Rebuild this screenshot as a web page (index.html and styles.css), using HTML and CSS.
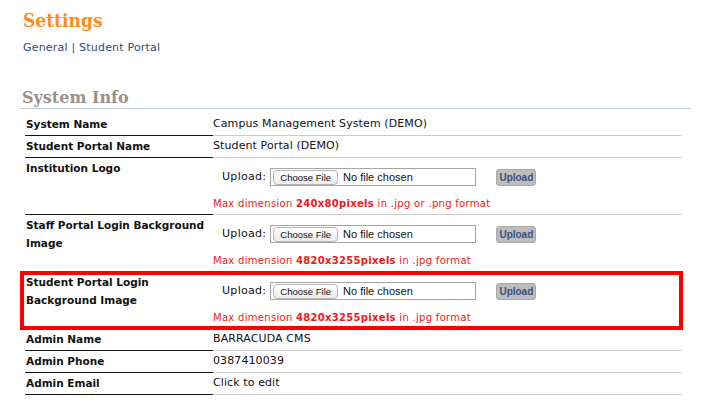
FILE: index.html
```html
<!DOCTYPE html>
<html lang="en">
<head>
    <meta charset="UTF-8">
    <title>Settings</title>
    <link rel="stylesheet" href="styles.css">
</head>
<body>
    <div class="page">
        <h1 class="page-title">Settings</h1>
        <div class="sub-nav">
            <a href="#">General</a> | <a href="#">Student Portal</a>
        </div>

        <h2 class="section-title">System Info</h2>
        <div class="info-table">
            <div class="info-row">
                <div class="info-label">System Name</div>
                <div class="info-value">Campus Management System (DEMO)</div>
            </div>
            <div class="info-row">
                <div class="info-label">Student Portal Name</div>
                <div class="info-value">Student Portal (DEMO)</div>
            </div>
            <div class="info-row">
                <div class="info-label">Institution Logo</div>
                <div class="info-value">
                    <div class="upload-line">
                        <span class="upload-caption">Upload:</span>
                        <span class="file-box"><span class="choose-btn">Choose File</span><span class="file-name">No file chosen</span></span>
                        <button class="upload-btn">Upload</button>
                    </div>
                    <div class="upload-hint">Max dimension <b>240x80pixels</b> in .jpg or .png format</div>
                </div>
            </div>
            <div class="info-row">
                <div class="info-label">Staff Portal Login Background Image</div>
                <div class="info-value">
                    <div class="upload-line">
                        <span class="upload-caption">Upload:</span>
                        <span class="file-box"><span class="choose-btn">Choose File</span><span class="file-name">No file chosen</span></span>
                        <button class="upload-btn">Upload</button>
                    </div>
                    <div class="upload-hint">Max dimension <b>4820x3255pixels</b> in .jpg format</div>
                </div>
            </div>
            <div class="info-row highlighted">
                <div class="info-label">Student Portal Login Background Image</div>
                <div class="info-value">
                    <div class="upload-line">
                        <span class="upload-caption">Upload:</span>
                        <span class="file-box"><span class="choose-btn">Choose File</span><span class="file-name">No file chosen</span></span>
                        <button class="upload-btn">Upload</button>
                    </div>
                    <div class="upload-hint">Max dimension <b>4820x3255pixels</b> in .jpg format</div>
                </div>
            </div>
            <div class="info-row">
                <div class="info-label">Admin Name</div>
                <div class="info-value">BARRACUDA CMS</div>
            </div>
            <div class="info-row">
                <div class="info-label">Admin Phone</div>
                <div class="info-value">0387410039</div>
            </div>
            <div class="info-row">
                <div class="info-label">Admin Email</div>
                <div class="info-value">Click to edit</div>
            </div>
        </div>
    </div>
</body>
</html>
```

FILE: styles.css
```css
body {
    margin: 0;
    background: #fff;
    font-family: "DejaVu Sans", Verdana, sans-serif;
    color: #111;
}
.page {
    width: 671px;
    padding-left: 20px;
}
.page-title {
    margin: 8px 0 0 3px;
    font-family: "DejaVu Serif Condensed", "DejaVu Serif", Georgia, serif;
    font-size: 19px;
    line-height: 24px;
    color: #ff8c1e;
}
.sub-nav {
    margin: 9px 0 0 3px;
    font-size: 11px;
    line-height: 14px;
    letter-spacing: 0.2px;
    color: #2f4a7c;
}
.sub-nav a {
    color: #2f4a7c;
    text-decoration: none;
}
.section-title {
    margin: 33px 0 0 0;
    padding: 0 0 0 2px;
    font-family: "DejaVu Serif", Georgia, serif;
    font-size: 16px;
    line-height: 20px;
    color: #9a918a;
    border-bottom: 1px solid #b9c8dc;
}
.info-table {
    margin: 5px 0 0 5px;
    width: 657px;
}
.info-row {
    display: flex;
    position: relative;
}
.info-label {
    width: 187px;
    padding: 1px 0 2px 1px;
    font-size: 10.5px;
    font-weight: bold;
    line-height: 18px;
    border-bottom: 1px solid #111;
}
.info-value {
    flex: 1;
    padding: 1px 0 2px 0;
    font-size: 11px;
    line-height: 18px;
    letter-spacing: 0.1px;
    border-bottom: 1px solid #ccc;
}
.upload-line {
    display: flex;
    align-items: center;
    height: 20px;
    margin: 8px 0 0 9px;
}
.upload-caption {
    font-size: 11px;
    letter-spacing: 0.3px;
    margin-right: 4px;
}
.file-box {
    display: flex;
    align-items: center;
    width: 204px;
    height: 16px;
    border: 1px solid #a6a6a6;
    font-family: "Liberation Sans", Arial, sans-serif;
    letter-spacing: 0;
}
.choose-btn {
    margin-left: 2px;
    padding: 0 6px;
    height: 13px;
    line-height: 13px;
    font-size: 9.5px;
    border: 1px solid #b5b5b5;
    border-radius: 4px;
    background: linear-gradient(#fff, #ececec);
}
.file-name {
    margin-left: 5px;
    font-size: 11px;
}
.upload-btn {
    margin-left: 20px;
    width: 40px;
    height: 17px;
    padding: 0;
    font-family: "Liberation Sans", Arial, sans-serif;
    font-size: 10px;
    font-weight: bold;
    color: #3b5083;
    background: #bdbdbd;
    border: 1px solid #a9a9a9;
    border-radius: 3px;
}
.upload-hint {
    margin-top: 9px;
    font-size: 10px;
    line-height: 16px;
    letter-spacing: 0.3px;
    color: #f01818;
}
.highlighted::after {
    content: "";
    position: absolute;
    left: -5px;
    right: -1px;
    top: -1px;
    bottom: -1px;
    border: 4px solid #f00;
    pointer-events: none;
}
```
